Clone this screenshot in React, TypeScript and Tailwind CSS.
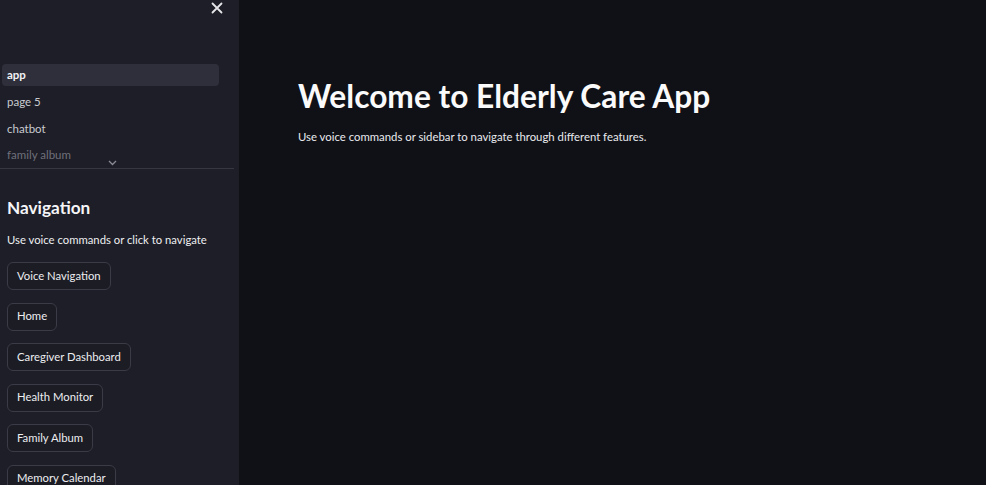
import React from "react";

const buttons = [
  "Voice Navigation",
  "Home",
  "Caregiver Dashboard",
  "Health Monitor",
  "Family Album",
  "Memory Calendar",
];

export default function App() {
  return (
    <div
      className="flex h-[485px] w-[986px] overflow-hidden bg-[#101218] text-white"
      style={{ fontFamily: "Lato, 'Noto Sans', sans-serif" }}
    >
      <aside className="relative w-[239px] shrink-0 overflow-hidden bg-[#1d1e27]">
        <div className="flex h-[64px] justify-end pr-[16px]">
          <svg width="12" height="12" viewBox="0 0 12 12" className="mt-[2px]">
            <path d="M1.5 1.5 L10.5 10.5 M10.5 1.5 L1.5 10.5" stroke="#e6e6ea" strokeWidth="1.8" strokeLinecap="round" />
          </svg>
        </div>
        <nav className="flex flex-col pl-[2px] pr-[20px]">
          <div className="flex h-[22px] items-center rounded-[4px] bg-[#2e2f3a] pl-[5px] text-[11.5px] font-bold text-[#f2f2f5]">
            app
          </div>
          <div className="flex h-[27px] items-center pl-[5px] pt-[4px] text-[11.5px] text-[#c9cad0]">page 5</div>
          <div className="flex h-[27px] items-center pl-[5px] pt-[4px] text-[11.5px] text-[#c9cad0]">chatbot</div>
          <div className="relative flex h-[26px] items-center pl-[5px] pt-[3px] text-[11.5px] text-[#6f707a]">
            family album
            <svg width="9" height="6" viewBox="0 0 9 6" className="absolute left-[106px] top-[20px]">
              <path d="M1 1 L4.5 4.5 L8 1" stroke="#8a8b95" strokeWidth="1.3" fill="none" />
            </svg>
          </div>
        </nav>
        <div className="mr-[5px] mt-[2px] h-px bg-[#363743]" />
        <div className="flex flex-col pl-[7px]">
          <h2 className="mt-[27px] text-[17.2px] font-bold leading-[24px] text-[#f5f5f7]">Navigation</h2>
          <p className="mt-[12px] text-[11.3px] leading-[16px] text-[#eeeef1]">Use voice commands or click to navigate</p>
          <div className="mt-[14px] flex flex-col items-start gap-[12.5px]">
            {buttons.map((b) => (
              <button
                key={b}
                className="flex h-[28px] shrink-0 items-center rounded-[6px] border border-[#3a3b46] bg-[#1b1c24] px-[9px] text-[11.3px] text-[#ededf0]"
              >
                {b}
              </button>
            ))}
          </div>
        </div>
      </aside>
      <main className="flex-1 bg-[#0f1117] pl-[59px] pt-[76px]">
        <h1 className="text-[31.7px] font-bold leading-[40px] text-[#fafafa]">Welcome to Elderly Care App</h1>
        <p className="mt-[12px] text-[11.35px] text-[#eaeaee]">
          Use voice commands or sidebar to navigate through different features.
        </p>
      </main>
    </div>
  );
}
